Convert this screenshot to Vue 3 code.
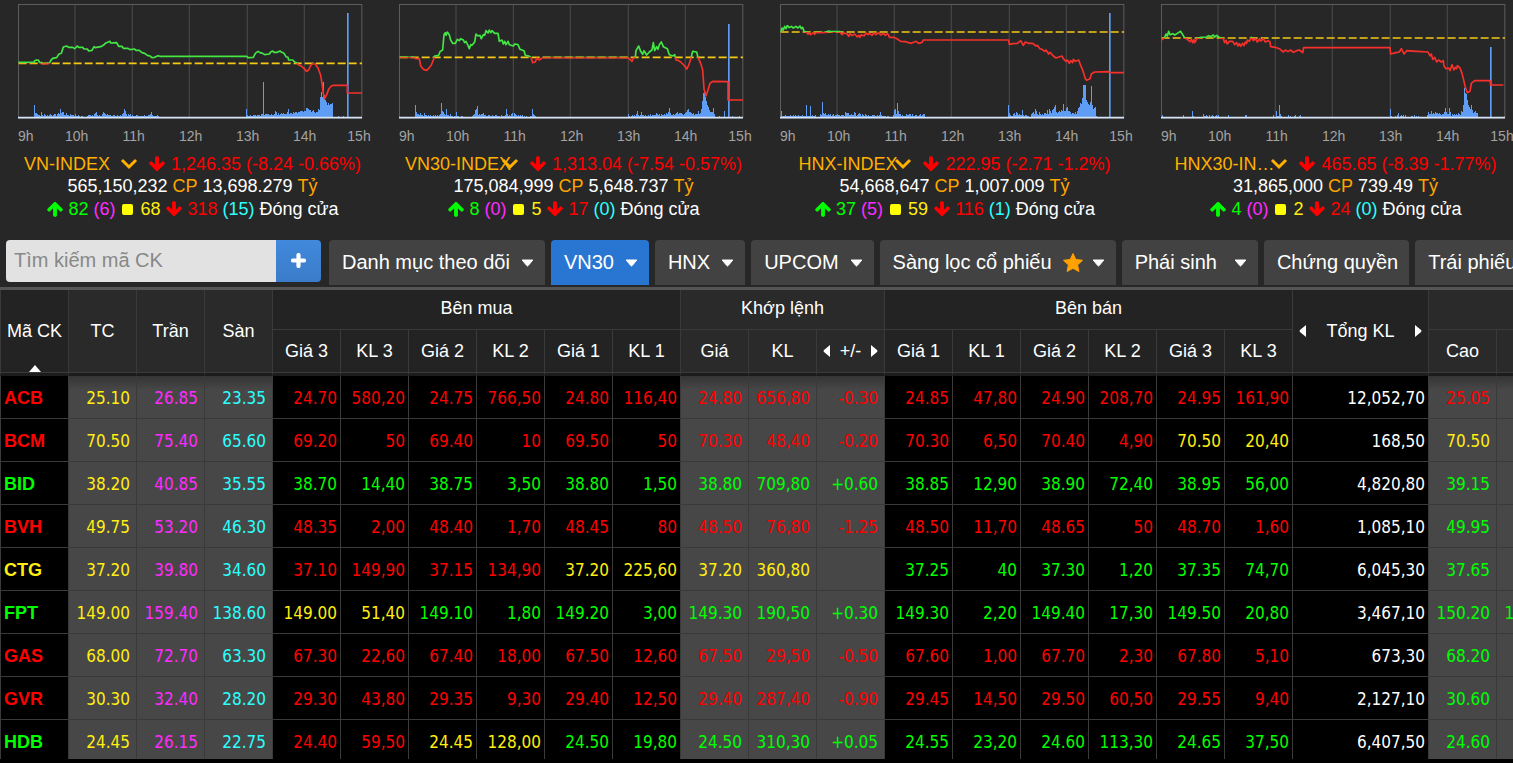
<script setup>
import { ref } from 'vue'

const hours = [
  { label: '9h', x: 77 },
  { label: '10h', x: 230 },
  { label: '11h', x: 401 },
  { label: '12h', x: 572 },
  { label: '13h', x: 743 },
  { label: '14h', x: 914 },
  { label: '15h', x: 1077 },
]
const gridLines = [225, 397, 568, 742, 913]

const indices = [
  {
    name: 'VN-INDEX', change: '1,246.35 (-8.24 -0.66%)', volume: '565,150,232', value: '13,698.279',
    up: 82, ceil: 6, flat: 68, down: 318, floor: 15, base: 190,
    line: '55,187 102,187 104,182 110,180 116,181 118,187 126,188 128,192 136,192 140,190 148,190 152,182 158,175 170,173 176,163 184,160 190,141 200,138 206,142 218,142 224,146 232,138 236,142 248,142 252,147 262,147 266,153 276,151 282,140 286,143 302,140 310,136 316,130 330,124 332,129 350,128 356,139 366,139 370,145 384,145 390,149 404,147 408,151 418,151 426,158 434,160 442,166 450,168 456,173 464,172 474,167 480,169 740,169 744,173 760,172 766,160 774,154 780,158 788,160 794,164 808,162 812,156 818,153 822,157 832,157 840,153 844,156 852,160 858,170 864,172 866,180 878,180 884,186 892,190 896,195 902,197 912,205 920,214 926,210 932,196 938,190 946,192 954,204 962,226 966,250 970,280 974,296 980,284 986,268 994,258 1000,256 1042,256 1042,279 1086,279',
    bars: {
      34: [12, 4, 4, 3, 2, 2, 1, 5, 2, 1, 3, 2, 1, 2, 1, 2, 3, 2, 1, 2, 3, 3, 1, 3, 4, 3, 8, 4, 5, 5, 2, 2, 4, 2, 2, 1, 3, 2, 2, 2, 1, 3, 1, 1, 2, 1, 0, 1, 1],
      87: [1, 2, 2, 2, 1, 2, 1, 3, 4, 5, 2, 1, 2, 1, 1, 3, 5, 4, 3, 2, 3, 2, 2, 2, 1, 1, 2, 2, 1, 1, 2, 1, 1, 2, 1, 3, 4, 8, 6, 3, 1, 3, 2, 3, 1, 2, 1, 1, 1, 2, 2, 1, 1, 1, 1, 1, 1, 2, 1, 1, 1, 2, 2, 3, 5, 2, 1, 1, 1, 1, 2, 1],
      246: [8, 2, 1, 1, 2, 1, 1, 2, 2, 2, 1, 2, 2, 2, 1, 3, 3, 35, 2, 3, 3, 3, 3, 2, 2, 3, 2, 2, 3, 6, 5, 2, 4, 2, 3, 4, 3, 4, 3, 3, 3, 5, 8, 3, 4, 4, 3, 5, 4, 5, 5, 4, 5, 5, 6, 6, 6, 5, 6, 6, 9, 9, 8, 7, 7, 5, 6, 7, 5, 4, 5, 5, 8, 7, 20, 25, 20, 35, 22, 17, 15, 12, 14, 12, 13, 13, 14],
      338: [1, 0, 0, 0, 0, 1], 347: [104],
    },
  },
  {
    name: 'VN30-INDEX', change: '1,313.04 (-7.54 -0.57%)', volume: '175,084,999', value: '5,648.737',
    up: 8, ceil: 0, flat: 5, down: 17, floor: 0, base: 172,
    line: '56,172 101,172 103,176 115,176 119,198 127,208 137,211 145,203 151,195 157,180 161,168 173,166 177,155 185,150 189,104 193,98 195,106 199,96 205,105 209,120 215,130 223,130 229,118 235,122 239,116 247,120 251,128 255,124 259,132 265,146 269,134 273,136 281,126 285,102 291,108 297,106 301,116 307,104 311,106 315,92 321,99 325,90 329,98 333,92 341,100 351,100 355,124 363,120 367,132 371,124 375,134 381,124 385,134 397,138 401,132 411,134 417,148 429,152 433,166 443,168 451,174 455,188 463,186 467,174 475,180 485,173 741,173 747,178 753,184 757,174 763,172 765,152 773,138 779,154 785,163 789,152 797,165 805,156 813,150 817,128 821,152 827,140 831,148 835,134 841,126 847,140 859,146 865,164 875,168 881,164 885,180 893,182 899,186 905,192 911,198 917,207 923,196 929,178 935,154 947,156 951,172 959,190 965,210 969,266 975,288 981,270 987,250 995,244 1041,245 1041,300 1086,300',
    bars: {
      34: [12, 5, 3, 3, 2, 4, 2, 2, 1, 4, 2, 2, 1, 2, 1, 2, 1, 1, 2, 1, 2, 1, 2, 1, 2, 3, 14, 6, 5, 3, 2, 8, 2, 2, 1, 3, 1, 1, 0, 1, 1, 5, 1, 1, 0, 0, 1, 1],
      91: [1, 2, 3, 7, 8, 11, 2, 3, 2, 3, 3, 4, 2, 2, 1, 1, 2, 2, 1, 1, 2, 1, 1, 2, 2, 1, 1, 1, 0, 2, 1, 1, 1, 2, 8, 3, 1, 2, 1, 3, 4, 1, 4, 3, 2, 1, 2, 1, 2, 1, 2, 0, 1, 0, 1, 0, 0, 0, 1, 1, 8, 3, 2, 1],
      247: [3, 1, 0, 1, 2, 1, 2, 1, 3, 6, 2, 1, 2, 5, 2, 2, 1, 2, 1, 1, 2, 1, 3, 1, 2, 2, 2, 2, 4, 3, 2, 3, 1, 3, 2, 2, 3, 2, 4, 3, 5, 9, 4, 2, 2, 3, 2, 3, 4, 5, 3, 4, 4, 4, 3, 2, 3, 4, 5, 7, 8, 5, 5, 4, 3, 4, 2, 3, 3, 3, 6, 3, 4, 8, 16, 24, 25, 20, 16, 12, 10, 7, 5, 5, 5, 9, 3],
      338: [1, 0, 0, 0, 0, 6], 347: [93, 0, 0, 0, 1, 0, 0, 0, 0, 0, 0, 1],
    },
  },
  {
    name: 'HNX-INDEX', change: '222.95 (-2.71 -1.2%)', volume: '54,668,647', value: '1,007.009',
    up: 37, ceil: 5, flat: 59, down: 116, floor: 1, base: 96,
    line: '57,96 60,84 64,90 68,79 72,86 76,77 82,83 88,79 94,84 102,79 108,84 114,78 118,86 122,82 126,94 134,96 138,103 142,98 146,104 154,98 158,103 162,98 170,98 194,97 198,93 208,95 234,95 240,104 246,99 256,102 260,109 264,101 270,107 278,102 286,111 290,106 294,112 298,104 306,108 312,99 318,104 322,100 330,106 336,99 342,104 350,98 356,105 364,100 370,106 376,101 380,105 382,112 396,112 406,117 416,124 430,125 440,128 448,130 462,124 470,130 480,127 484,120 740,120 742,133 752,131 766,130 776,122 784,136 790,126 800,130 812,130 822,138 826,136 834,146 840,148 848,154 852,150 860,162 864,157 874,168 882,174 900,168 904,176 912,184 916,180 922,190 926,182 932,188 934,178 940,184 950,180 956,196 962,210 970,236 974,241 984,236 988,222 998,216 1040,215 1044,218 1086,218',
    bars: {
      19: [6, 1, 1, 1, 2, 1, 1, 1, 1, 2, 1, 1, 2, 1, 2, 1, 1, 2, 1, 1, 1, 2, 1, 1, 1, 12, 1, 1, 1, 11, 1, 2, 1, 1, 2],
      58: [3, 2, 15, 4, 3, 4, 2, 2, 3, 2, 3, 1, 2, 3, 1, 2, 2, 3, 2, 2, 1, 2, 2, 2, 1, 5, 4, 4, 4, 2, 2, 3, 2, 2, 5, 4, 1, 2, 3, 4, 3, 1, 3, 2, 1, 3, 2, 1, 2, 1, 1, 1, 2, 2, 2, 1, 1, 2, 1, 2, 5, 2, 1, 1, 1, 1, 0, 1, 1],
      131: [2, 7, 8, 3, 14, 6, 3, 3, 1, 2, 1, 1, 1, 3, 2, 2, 3, 3, 1, 3, 1, 1, 2, 2, 1, 1, 2, 3, 1, 2, 3, 3],
      246: [12, 4, 2, 1, 1, 3, 4, 2, 5, 4, 2, 3, 2, 2, 7, 2, 1, 2, 2, 1, 1, 0, 0, 3, 4, 5, 3, 8, 6, 3, 2, 5, 3, 2, 3, 2, 4, 4, 3, 7, 3, 8, 6, 4, 7, 8, 10, 12, 5, 4, 5, 6, 5, 7, 6, 13, 6, 6, 9, 10, 6, 6, 5, 3, 4, 4, 3, 5, 3, 6, 9, 10, 14, 13, 19, 32, 32, 32, 17, 15, 13, 12, 15, 31, 12, 8, 9, 10, 1],
      347: [104],
    },
  },
  {
    name: 'HNX30-IN…', change: '465.65 (-8.39 -1.77%)', volume: '31,865,000', value: '739.49',
    up: 4, ceil: 0, flat: 2, down: 24, floor: 0, base: 114,
    line: '57,120 65,112 69,102 73,108 77,94 81,104 89,101 95,105 103,100 113,94 119,104 125,114 133,118 141,125 145,118 149,128 153,119 155,128 163,114 175,112 191,111 197,107 203,110 211,105 215,111 221,106 231,114 241,116 245,128 249,121 253,132 259,124 269,124 275,134 281,128 285,138 289,131 293,139 299,130 303,137 307,126 311,130 313,120 319,124 325,112 331,122 337,116 343,126 349,117 353,123 361,116 367,126 375,122 381,126 383,140 397,142 409,146 421,156 427,150 435,155 443,150 451,157 461,152 469,150 479,158 482,143 741,143 743,162 759,158 769,156 775,146 783,162 791,152 821,154 855,156 861,168 865,162 869,178 875,172 881,186 887,180 895,186 901,182 903,198 909,206 917,204 921,212 927,194 933,210 937,202 941,206 943,197 951,204 957,220 963,244 967,262 973,278 981,274 985,250 995,242 1041,242 1043,255 1081,255',
    bars: {
      19: [2], 40: [2], 49: [6, 1],
      60: [3, 1, 1, 2, 1, 0, 2, 0, 1, 2, 1, 0, 1, 2, 1, 2],
      85: [2], 102: [2, 2],
      130: [2, 0, 0, 6, 1, 1, 12, 3, 1],
      145: [2, 0, 1, 0, 0, 0, 1, 2, 0, 0, 0, 1, 2],
      247: [8, 1],
      252: [1, 0, 2, 4, 0, 1, 2, 1, 2, 0, 2],
      268: [1, 1, 0, 2, 0, 1, 0, 1],
      284: [2, 5, 3, 3, 6, 3, 4, 3, 5, 4, 4, 3, 4, 3, 2, 3, 3, 5, 9, 5, 3, 3, 9, 5, 1, 3, 2, 3, 2, 3, 2, 4, 3, 2, 6, 5, 12, 29, 24, 23, 17, 12, 10, 8, 12, 7, 4, 5, 6, 4, 4],
      347: [70],
    },
  },
]

// one closed column per minute bucket, standing on the time axis
function barPath(bars, tall) {
  const width = tall ? 5 : 3
  return Object.entries(bars)
    .map(([start, heights]) =>
      heights
        .map((h, i) => (h && h > 60 === tall ? `M${(Number(start) + i) * 3} 351v${-h * 3}h${width}v${h * 3}z` : ''))
        .join(''))
    .join('')
}

const search = ref('')
const tabs = [
  { label: 'Danh mục theo dõi', menu: true },
  { label: 'VN30', menu: true, active: true },
  { label: 'HNX', menu: true },
  { label: 'UPCOM', menu: true },
  { label: 'Sàng lọc cổ phiếu', menu: true, star: true },
  { label: 'Phái sinh', menu: true, wide: true },
  { label: 'Chứng quyền' },
  { label: 'Trái phiếu', menu: true },
]

// colour letters: r down, g up, y reference, w neutral
const source = [
  'ACB r|25.10 26.85 23.35|24.70r 580,20r 24.75r 766,50r 24.80r 116,40r|24.80r 656,80r -0.30r|24.85r 47,80r 24.90r 208,70r 24.95r 161,90r|12,052,70w|25.05r',
  'BCM r|70.50 75.40 65.60|69.20r 50r 69.40r 10r 69.50r 50r|70.30r 48,40r -0.20r|70.30r 6,50r 70.40r 4,90r 70.50y 20,40y|168,50w|70.50y',
  'BID g|38.20 40.85 35.55|38.70g 14,40g 38.75g 3,50g 38.80g 1,50g|38.80g 709,80g +0.60g|38.85g 12,90g 38.90g 72,40g 38.95g 56,00g|4,820,80w|39.15g',
  'BVH r|49.75 53.20 46.30|48.35r 2,00r 48.40r 1,70r 48.45r 80r|48.50r 76,80r -1.25r|48.50r 11,70r 48.65r 50r 48.70r 1,60r|1,085,10w|49.95g',
  'CTG y|37.20 39.80 34.60|37.10r 149,90r 37.15r 134,90r 37.20y 225,60y|37.20y 360,80y y|37.25g 40g 37.30g 1,20g 37.35g 74,70g|6,045,30w|37.65g',
  'FPT g|149.00 159.40 138.60|149.00y 51,40y 149.10g 1,80g 149.20g 3,00g|149.30g 190,50g +0.30g|149.30g 2,20g 149.40g 17,30g 149.50g 20,80g|3,467,10w|150.20g 149.40g',
  'GAS r|68.00 72.70 63.30|67.30r 22,60r 67.40r 18,00r 67.50r 12,60r|67.50r 29,50r -0.50r|67.60r 1,00r 67.70r 2,30r 67.80r 5,10r|673,30w|68.20g',
  'GVR r|30.30 32.40 28.20|29.30r 43,80r 29.35r 9,30r 29.40r 12,50r|29.40r 287,40r -0.90r|29.45r 14,50r 29.50r 60,50r 29.55r 9,40r|2,127,10w|30.60g',
  'HDB g|24.45 26.15 22.75|24.40r 59,50r 24.45y 128,00y 24.50g 19,80g|24.50g 310,30g +0.05g|24.55g 23,20g 24.60g 113,30g 24.65g 37,50g|6,407,50w|24.60g',
]
const toCell = (token, shade) => ({ text: token.slice(0, -1), color: token.slice(-1), shade })
const rows = source.map((line) => {
  const [head, refs, buy, match, sell, total, range] = line.split('|').map((g) => g.split(' '))
  const rangeCells = range.map((t) => toCell(t, true))
  while (rangeCells.length < 3) rangeCells.push({ text: '', color: 'w', shade: true })
  return {
    symbol: head[0],
    color: head[1],
    cells: [
      ...refs.map((text, i) => ({ text, color: 'ymc'[i], shade: true })),
      ...buy.map((t) => toCell(t, false)),
      ...match.map((t) => toCell(t, true)),
      ...sell.map((t) => toCell(t, false)),
      ...total.map((t) => toCell(t, false)),
      ...rangeCells,
    ],
  }
})
const buyHeads = ['Giá 3', 'KL 3', 'Giá 2', 'KL 2', 'Giá 1', 'KL 1']
const sellHeads = ['Giá 1', 'KL 1', 'Giá 2', 'KL 2', 'Giá 3', 'KL 3']
const arrow = 'M1675 832q0 51-37 90l-651 652q-39 37-91 37-53 0-90-37l-651-652q-38-36-38-90 0-53 38-91l74-75q39-37 91-37 53 0 90 37l294 294v-704q0-52 38-90t90-38h128q52 0 90 38t38 90v704l294-294q37-37 90-37 52 0 91 37l75 75q37 39 37 91z'
</script>

<template>
  <div class="page">
    <section class="indices">
      <article v-for="(ix, n) in indices" :key="ix.name" class="index">
        <svg class="chart" viewBox="0 0 1143 459" role="img" :aria-label="ix.name">
          <defs>
            <clipPath :id="`above${n}`"><rect x="0" y="0" width="1143" :height="ix.base" /></clipPath>
            <clipPath :id="`below${n}`"><rect x="0" :y="ix.base" width="1143" height="300" /></clipPath>
          </defs>
          <path v-for="x in gridLines" :key="x" :d="`M${x} 14V351`" stroke="#434343" stroke-width="4" />
          <rect x="55.5" y="13.5" width="1030" height="340" fill="none" stroke="#5c5c5c" stroke-width="3" />
          <path :d="barPath(ix.bars, false)" fill="#5f9cf3" shape-rendering="crispEdges" />
          <path :d="barPath(ix.bars, true)" fill="#5f9cf3" />
          <path :d="`M56 ${ix.base}H1086`" stroke="#f5c813" stroke-width="5" stroke-dasharray="24 9" />
          <g fill="none" stroke-width="5" stroke-linejoin="round">
            <polyline :points="ix.line" stroke="#43e645" :clip-path="`url(#above${n})`" />
            <polyline :points="ix.line" stroke="#f8302c" :clip-path="`url(#below${n})`" />
          </g>
          <path d="M54 353H1086" stroke="#d5e3f5" stroke-width="5" />
          <text v-for="h in hours" :key="h.label" :x="h.x" y="423" class="hour">{{ h.label }}</text>
        </svg>
        <div class="line">
          <span class="picker">
            <select :aria-label="`Chỉ số ${n + 1}`">
              <option>{{ ix.name }}</option>
            </select>
            <svg class="chevron" viewBox="0 0 18 12"><path d="M2 2l7 7 7-7" fill="none" stroke="#ffb000" stroke-width="3" /></svg>
          </span>
          <svg class="arrow r" viewBox="0 0 1792 1792"><path :d="arrow" /></svg>
          <span class="r">{{ ix.change }}</span>
        </div>
        <div class="line">
          <span>{{ ix.volume }}</span><span class="o">CP</span><span>{{ ix.value }}</span><span class="o">Tỷ</span>
        </div>
        <div class="line counts">
          <svg class="arrow flip g" viewBox="0 0 1792 1792"><path :d="arrow" /></svg>
          <span class="g">{{ ix.up }}</span>
          <span class="m">({{ ix.ceil }})</span>
          <i class="square"></i>
          <span class="y">{{ ix.flat }}</span>
          <svg class="arrow r" viewBox="0 0 1792 1792"><path :d="arrow" /></svg>
          <span class="r">{{ ix.down }}</span>
          <span class="c">({{ ix.floor }})</span>
          <span>Đóng cửa</span>
        </div>
      </article>
    </section>

    <nav class="toolbar">
      <form class="search" @submit.prevent>
        <input v-model="search" type="text" placeholder="Tìm kiếm mã CK" aria-label="Tìm kiếm mã CK">
        <button type="submit" aria-label="Thêm mã">
          <svg viewBox="0 0 15 15"><path d="M7.500 2v11M2 7.500h11" stroke="#fff" stroke-width="4.200" stroke-linecap="round" /></svg>
        </button>
      </form>
      <button v-for="t in tabs" :key="t.label" type="button" class="tab" :class="{ active: t.active, wide: t.wide }">
        <span>{{ t.label }}</span>
        <svg v-if="t.star" class="star" viewBox="0 0 20 19"><path d="M10 .5l2.800 6 6.700.8-4.900 4.600 1.300 6.600L10 15.300l-5.900 3.200 1.300-6.600L.5 7.300l6.700-.8z" fill="#ffa200" stroke="#ffa200" stroke-linejoin="round" /></svg>
        <svg v-if="t.menu" class="caret" viewBox="0 0 13 8"><path d="M1.200 1h10.600L7.200 6.600q-.7.8-1.400 0z" fill="#fff" stroke="#fff" stroke-linejoin="round" /></svg>
      </button>
    </nav>

    <main class="board">
      <table>
        <colgroup>
          <col v-for="i in 19" :key="i">
          <col class="double">
          <col v-for="i in 3" :key="i">
        </colgroup>
        <thead>
          <tr class="groups">
            <th rowspan="2" class="code">
              Mã CK
              <svg class="sort" viewBox="0 0 12 7"><path d="M0 7l6-7 6 7z" fill="#fff" /></svg>
            </th>
            <th rowspan="2" class="alt">TC</th>
            <th rowspan="2" class="alt">Trần</th>
            <th rowspan="2" class="alt">Sàn</th>
            <th colspan="6">Bên mua</th>
            <th colspan="3" class="alt">Khớp lệnh</th>
            <th colspan="6">Bên bán</th>
            <th rowspan="2">
              <div class="switch">
                <button type="button" aria-label="Trước"><svg viewBox="0 0 7 12"><path d="M7 0v12L1 7q-1-1 0-2z" fill="#fff" /></svg></button>
                <span>Tổng KL</span>
                <button type="button" aria-label="Sau"><svg viewBox="0 0 7 12"><path d="M0 0v12l6-5q1-1 0-2z" fill="#fff" /></svg></button>
              </div>
            </th>
            <th colspan="3" class="alt"></th>
          </tr>
          <tr class="names">
            <th v-for="h in buyHeads" :key="h">{{ h }}</th>
            <th class="alt">Giá</th>
            <th class="alt">KL</th>
            <th class="alt">
              <div class="switch">
                <button type="button" aria-label="Trước"><svg viewBox="0 0 7 12"><path d="M7 0v12L1 7q-1-1 0-2z" fill="#fff" /></svg></button>
                <span>+/-</span>
                <button type="button" aria-label="Sau"><svg viewBox="0 0 7 12"><path d="M0 0v12l6-5q1-1 0-2z" fill="#fff" /></svg></button>
              </div>
            </th>
            <th v-for="h in sellHeads" :key="h">{{ h }}</th>
            <th class="alt">Cao</th>
            <th class="alt"></th>
            <th class="alt"></th>
          </tr>
        </thead>
        <tbody>
          <tr v-for="row in rows" :key="row.symbol">
            <th scope="row" :class="row.color">{{ row.symbol }}</th>
            <td v-for="(cell, i) in row.cells" :key="i" :class="[cell.color, { shade: cell.shade }]">{{ cell.text }}</td>
          </tr>
        </tbody>
      </table>
    </main>
  </div>
</template>

<style>
body {
  margin: 0;
  background: #000;
}
</style>

<style scoped>
.page {
  display: flex;
  flex-direction: column;
  height: 100vh;
  overflow: hidden;
  background: #272727;
  color: #fff;
  font-family: "Liberation Sans", Arial, sans-serif;
  font-size: 18px;
}
.page * {
  box-sizing: border-box;
}
button,
input,
select {
  font: inherit;
  color: inherit;
  border: 0;
  margin: 0;
  padding: 0;
  background: none;
}
.r { color: #f00; }
.g { color: #0f0; }
.y { color: #ffee10; }
.m { color: #ff2bff; }
.c { color: #2bffff; }
.o { color: #ffa500; }
.w { color: #fff; }

.indices {
  display: grid;
  grid-template-columns: repeat(4, 1fr);
  margin-right: -11px;
  flex: none;
}
.chart {
  display: block;
  width: 100%;
}
.hour {
  font-size: 42px;
  fill: #a3a3a3;
  text-anchor: middle;
}
.line {
  display: flex;
  justify-content: center;
  align-items: center;
  gap: 5px;
  height: 22px;
  line-height: 22px;
  padding-left: 4px;
  white-space: nowrap;
}
.counts {
  height: 24px;
  line-height: 24px;
}
.counts .arrow {
  margin-right: -1px;
}
.picker {
  position: relative;
  width: 114px;
  height: 22px;
  margin-right: 5px;
  color: #ffb000;
}
.picker select {
  display: block;
  appearance: none;
  width: 114px;
  height: 22px;
  line-height: 22px;
}
.chevron {
  position: absolute;
  right: 0;
  top: 5px;
  width: 18px;
  height: 12px;
  pointer-events: none;
}
.arrow {
  width: 18px;
  height: 18px;
  flex: none;
  fill: currentColor;
}
.flip {
  transform: rotate(180deg);
}
.square {
  width: 11px;
  height: 11px;
  margin: 0 2px;
  border-radius: 2px;
  background: #ff0;
}

.toolbar {
  display: flex;
  flex: none;
  gap: 6px;
  height: 50px;
  margin-top: 19px;
  padding-left: 6px;
  border-bottom: 3px solid #555;
  white-space: nowrap;
}
.search {
  display: flex;
  flex: none;
  width: 315px;
  height: 42px;
  margin-right: 2px;
  border-radius: 4px;
  overflow: hidden;
  font-size: 20px;
}
.search input {
  flex: 1;
  min-width: 0;
  padding: 0 8px 2px;
  background: #e2e2e2;
  color: #333;
}
.search input::placeholder {
  color: #888;
  opacity: 1;
}
.search button {
  width: 45px;
  background: linear-gradient(#4189dc, #3a7cc8);
}
.search svg {
  display: block;
  width: 15px;
  height: 15px;
  margin: -2px auto 0;
}
.tab {
  display: flex;
  flex: none;
  align-items: center;
  gap: 11px;
  height: 45px;
  padding: 0 11px 0 13px;
  border-radius: 4px 4px 0 0;
  background: #424242;
  font-size: 20px;
}
.wide {
  gap: 17px;
}
.active {
  background: #2976d2;
}
.star {
  width: 20px;
  height: 19px;
  margin-right: -2px;
}
.caret {
  width: 13px;
  height: 8px;
}

.board {
  flex: 1;
  min-height: 0;
  overflow: hidden;
  border-bottom: 4px solid #000;
  background: #000;
}
table {
  width: 1632px;
  table-layout: fixed;
  border-collapse: separate;
  border-spacing: 0;
}
col {
  width: 68px;
}
col.double {
  width: 136px;
}
thead th {
  padding: 0;
  border-left: 1px solid #3a3a3a;
  border-bottom: 1px solid #3a3a3a;
  background: #232323;
  font-weight: 400;
  white-space: nowrap;
}
thead th.alt {
  background: #2a2a2a;
}
.groups {
  height: 40px;
}
.groups th {
  padding-bottom: 3px;
}
.names {
  height: 46px;
}
.names th,
.groups th[rowspan] {
  padding-bottom: 1px;
  border-bottom: 3px solid #1c1c1c;
  box-shadow: inset 0 -1px #3a3a3a;
}
.code {
  position: relative;
}
.sort {
  position: absolute;
  left: 28px;
  bottom: 1px;
  width: 12px;
  height: 7px;
}
.switch {
  display: flex;
  align-items: center;
  justify-content: space-between;
  padding: 0 6px;
}
.switch svg {
  display: block;
  width: 7px;
  height: 12px;
}
tbody tr {
  height: 43px;
}
tbody th,
tbody td {
  padding: 2px 3px 0 0;
  border-left: 1px solid #3a3a3a;
  border-bottom: 1px solid #3a3a3a;
  background: #000;
  white-space: nowrap;
}
tbody th {
  padding: 2px 0 0 3px;
  text-align: left;
  font-weight: 700;
}
tbody td {
  text-align: right;
  font-family: "DejaVu Sans Condensed", "Noto Sans", sans-serif;
  font-size: 17px;
}
tbody td.shade {
  padding-right: 6px;
  background: #474747;
}
tbody tr:first-child td.shade {
  background: linear-gradient(#353535, #474747 14px);
}
</style>
